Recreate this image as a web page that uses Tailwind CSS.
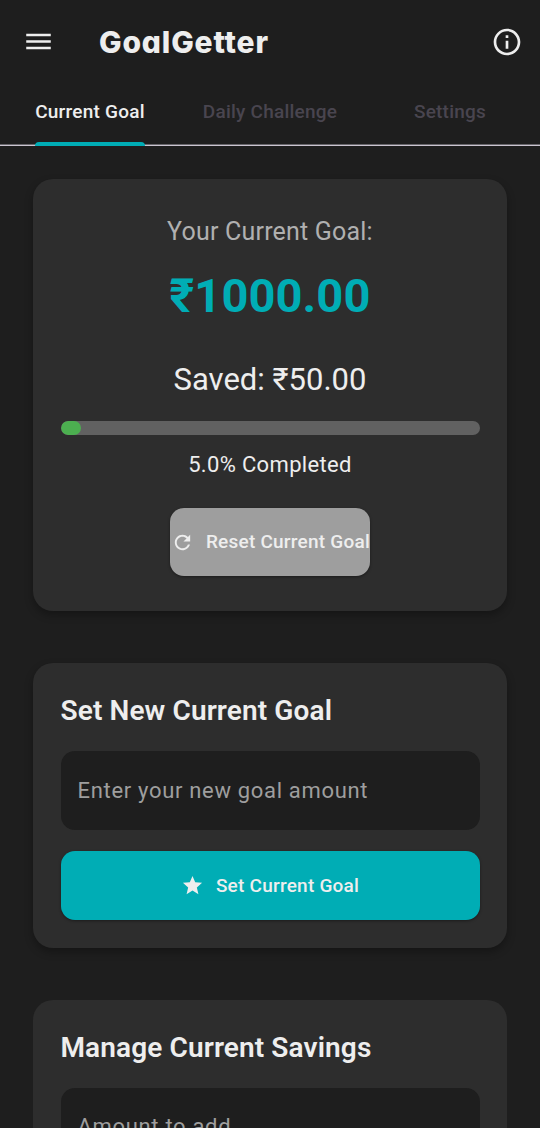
<!DOCTYPE html>
<html lang="en">
<head>
<meta charset="utf-8">
<title>GoalGetter</title>
<script src="https://cdn.jsdelivr.net/npm/@tailwindcss/browser@4"></script>
</head>
<body class="flex h-[1128px] flex-col overflow-hidden bg-[#1e1e1e] font-[Roboto,sans-serif] text-[#eeeeee]">
<header class="flex h-[83px] shrink-0 items-center pl-[23px] pr-[17px]">
  <svg class="size-[31px]" viewBox="0 0 24 24" fill="currentColor"><path d="M2.500 18h19v-2h-19v2zm0-5h19v-2h-19v2zm0-7v2h19V6h-19z"/></svg>
  <h1 class="ml-[45px] flex-1 whitespace-nowrap pt-px font-[Inter,sans-serif] text-[30px] font-extrabold tracking-[0.85px] [font-feature-settings:'cv11']">GoalGetter</h1>
  <svg class="size-[32px]" viewBox="0 0 24 24" fill="currentColor"><path d="M11 7h2v2h-2zm0 4h2v6h-2zm1-9C6.480 2 2 6.480 2 12s4.480 10 10 10 10-4.480 10-10S17.520 2 12 2zm0 18c-4.410 0-8-3.590-8-8s3.590-8 8-8 8 3.590 8 8-3.590 8-8 8z"/></svg>
</header>
<nav class="grid h-[63px] shrink-0 grid-cols-3 border-b border-[#cac4d0] text-center text-[19px] font-medium leading-[58px] tracking-[0.23px] text-[#49454f] shadow-[inset_0_-1px_0_#67656a]">
  <div class="flex justify-center"><div class="flex h-[63px] flex-col justify-between text-[#eeeeee]"><span>Current Goal</span><i class="h-1 rounded-t-[4px] bg-[#00adb5]"></i></div></div>
  <div>Daily Challenge</div>
  <div>Settings</div>
</nav>
<main class="flex min-h-0 flex-1 flex-col gap-[52px] overflow-hidden px-[33px] pt-[33px]">
  <section class="flex h-[432px] shrink-0 flex-col items-center rounded-[20px] bg-[#2d2d2d] px-[27.5px] pt-9 shadow-[0_4px_8px_rgba(0,0,0,0.3)]">
    <p class="pt-px text-[25px] leading-[32px] tracking-[0.2px] text-[#b0b0b0]">Your Current Goal:</p>
    <p class="mt-5 text-[47px] font-bold leading-[56px] tracking-[0.1px] text-[#00adb5]">₹1000.00</p>
    <p class="mt-[38px] text-[31px] leading-[36px]">Saved: ₹50.00</p>
    <div class="mt-[23px] h-[14px] w-full overflow-hidden rounded-full bg-[#616161]"><div class="h-full rounded-full bg-[#4caf50]" style="width:5%"></div></div>
    <p class="mt-4 text-[22px] leading-[28px] tracking-[0.34px]">5.0% Completed</p>
    <button class="mt-[29px] flex h-[68px] w-[200px] items-center justify-between whitespace-nowrap rounded-[14px] bg-[#9e9e9e] pl-[1px] text-[19px] font-medium tracking-[0.23px] shadow-[0_1px_3px_rgba(0,0,0,0.4)]">
      <svg class="size-[23px] shrink-0" viewBox="0 0 24 24" fill="currentColor"><path d="M17.650 6.350C16.200 4.900 14.210 4 12 4c-4.420 0-7.990 3.580-7.990 8s3.570 8 7.990 8c3.730 0 6.840-2.550 7.730-6h-2.080c-.82 2.330-3.040 4-5.650 4-3.310 0-6-2.690-6-6s2.690-6 6-6c1.660 0 3.140.69 4.220 1.780L13 11h7V4l-2.350 2.350z"/></svg>
      <span class="pt-px">Reset Current Goal</span>
    </button>
  </section>
  <section class="flex h-[285px] shrink-0 flex-col rounded-[20px] bg-[#2d2d2d] px-[27.5px] pt-[28px] shadow-[0_4px_8px_rgba(0,0,0,0.3)]">
    <h2 class="text-[28px] font-semibold leading-[40px] tracking-[0.12px]">Set New Current Goal</h2>
    <input class="mt-5 h-[79px] rounded-[14px] bg-[#1e1e1e] px-[17px] text-[22px] tracking-[0.68px] placeholder:text-[#9e9e9e] placeholder:opacity-100" placeholder="Enter your new goal amount">
    <button class="mt-[21px] flex h-[69px] items-center justify-center gap-3 rounded-[14px] bg-[#00adb5] text-[19px] font-medium tracking-[0.23px] shadow-[0_1px_3px_rgba(0,0,0,0.4)]">
      <svg class="size-[23px]" viewBox="0 0 24 24" fill="currentColor"><path d="M12 17.270 18.180 21l-1.640-7.030L22 9.240l-7.190-.61L12 2 9.190 8.630 2 9.240l5.460 4.730L5.820 21z"/></svg>
      <span class="pt-px">Set Current Goal</span>
    </button>
  </section>
  <section class="flex h-[285px] shrink-0 flex-col rounded-[20px] bg-[#2d2d2d] px-[27.5px] pt-[28px]">
    <h2 class="text-[28px] font-semibold leading-[40px] tracking-[0.12px]">Manage Current Savings</h2>
    <input class="mt-5 h-[79px] rounded-[14px] bg-[#1e1e1e] px-[17px] pb-[3px] text-[22px] tracking-[0.68px] placeholder:text-[#9e9e9e] placeholder:opacity-100" placeholder="Amount to add">
  </section>
</main>
</body>
</html>
